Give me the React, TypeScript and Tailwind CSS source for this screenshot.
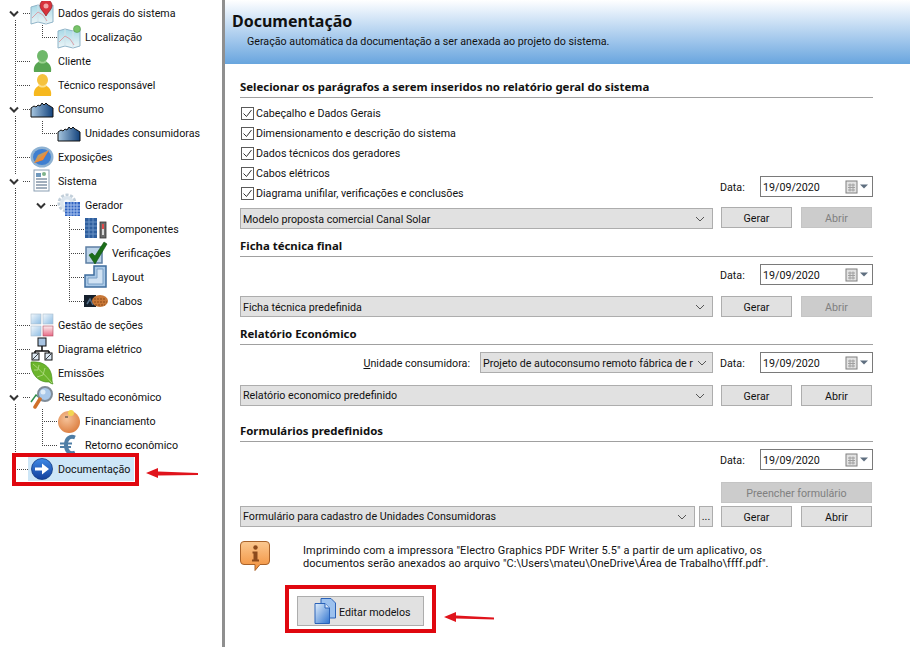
import type { ReactNode } from "react";

const Ico = ({ children, w = 24, h = 24 }: { children: ReactNode; w?: number; h?: number }) => (
  <svg width={w} height={h} viewBox={`0 0 ${w} ${h}`} className="shrink-0">
    {children}
  </svg>
);

const MapBase = () => (
  <>
    <path d="M1 6l7-2 8 2 7-2v17l-7 2-8-2-7 2z" fill="url(#mapG)" stroke="#8fb4c8" strokeWidth="1" />
    <path d="M8 4v17M16 6v17" stroke="#d3e3ea" strokeWidth="1" />
    <path d="M2 17l6-6 5 3 4 6" fill="none" stroke="#d8a0a8" strokeWidth="1" />
  </>
);

const PinMap = () => (
  <Ico>
    <MapBase />
    <path d="M16 15c-3-5-6-7-6-10.500a6 6 0 0 1 12 0c0 3.500-3 5.500-6 10.500z" fill="#d8333c" stroke="#8e1a20" strokeWidth="0.7" />
    <circle cx="16" cy="5" r="2.500" fill="#f0a8a8" />
  </Ico>
);

const GreenMap = () => (
  <Ico>
    <MapBase />
    <circle cx="20" cy="4" r="3.500" fill="#79c36a" stroke="#4f9a48" strokeWidth="0.6" />
  </Ico>
);

const UserIco = ({ a, b, c }: { a: string; b: string; c: string }) => (
  <Ico>
    <ellipse cx="12.500" cy="7" rx="5.500" ry="6" fill={a} />
    <path d="M4 23c-1-6 2-9 6-11h5c4 2 7 5 6 11z" fill={b} />
    <path d="M9.500 11c1 2 5 2 6 0l1 2c-2 2-6 2-8 0z" fill={c} />
  </Ico>
);

const Skyline = () => (
  <Ico>
    <path d="M1 20v-9l3-2 2 1 2-2 2 1 2-3 2 2 2-2 2 2 2 1 3 2v9z" fill="url(#skyG)" stroke="#111" strokeWidth="1" />
  </Ico>
);

const Compass = () => (
  <Ico>
    <ellipse cx="12" cy="12" rx="11.500" ry="10.500" fill="#8fb2d2" />
    <ellipse cx="12" cy="12" rx="9" ry="8" fill="#3f7fd0" />
    <path d="M4 18L19 5l-6 10z" fill="#e0452a" />
    <path d="M4 18l9-3 6-10-11 5z" fill="#f2a33a" opacity="0.75" />
  </Ico>
);

const DocSys = () => (
  <Ico>
    <rect x="4" y="1" width="15" height="21" fill="#fdfdfd" stroke="#8ba0b4" />
    <rect x="6" y="4" width="5" height="4" fill="#6f98bd" />
    <circle cx="14" cy="5" r="2" fill="#7fb38a" />
    <path d="M6 10h11M6 13h11M6 16h11M6 19h11" stroke="#46617c" strokeWidth="1" />
  </Ico>
);

const GearGrid = () => (
  <Ico>
    <circle cx="10" cy="10" r="8" fill="none" stroke="#c2cfda" strokeWidth="3" strokeDasharray="3 1.500" />
    <circle cx="10" cy="10" r="7" fill="#dbe5ee" />
    <circle cx="10" cy="10" r="3.500" fill="#f3f7fa" />
    <rect x="8" y="9" width="15" height="14" fill="#2f62c0" />
    <path d="M8 12h15M8 15h15M8 18h15M8 21h15M11 9v14M14 9v14M17 9v14M20 9v14" stroke="#a8c2ee" strokeWidth="1" />
  </Ico>
);

const Comps = () => (
  <Ico>
    <rect x="1" y="1" width="12" height="20" fill="#2f5f9e" />
    <path d="M1 5h12M1 9h12M1 13h12M1 17h12M5 1v20M9 1v20" stroke="#6b93c5" strokeWidth="1" />
    <rect x="16" y="5" width="6" height="16" fill="#6b6b6b" stroke="#333" strokeWidth="0.8" />
    <rect x="18" y="7" width="2" height="5" fill="#e24a4a" />
    <rect x="18" y="12" width="2" height="6" fill="#d8d8d8" />
  </Ico>
);

const Check = () => (
  <Ico>
    <rect x="2" y="6" width="16" height="16" fill="#bcd3e8" stroke="#5d7fa4" strokeWidth="1.500" />
    <path d="M5 14l3-2 3 3L20 1l3 2L11 23z" fill="#1b6f18" stroke="#10500f" strokeWidth="0.6" />
  </Ico>
);

const LayoutIco = () => (
  <Ico>
    <path d="M1 10h9V1h12v21H1z" fill="#a9c8e6" stroke="#3f6e9f" strokeWidth="1.500" />
    <path d="M4 13h9V4h6v15H4z" fill="#d0e2f3" stroke="#7aa0c6" strokeWidth="1" />
  </Ico>
);

const Cables = () => (
  <Ico>
    <rect x="0" y="6" width="12" height="12" fill="#15202c" />
    <path d="M3 15l3-5 3 6" stroke="#56708a" strokeWidth="1.500" fill="none" />
    <ellipse cx="16" cy="12" rx="8" ry="6" fill="#c87838" />
    <path d="M10 10h12M10 13h13M11 16h10" stroke="#8c4a18" strokeWidth="1" strokeDasharray="2 1" />
  </Ico>
);

const Squares = () => (
  <Ico>
    <rect x="1" y="1" width="10" height="10" fill="url(#sqG)" stroke="#a9bccc" strokeWidth="0.6" />
    <rect x="13" y="1" width="10" height="10" fill="url(#sqG)" stroke="#a9bccc" strokeWidth="0.6" />
    <rect x="1" y="13" width="10" height="10" fill="url(#sqG)" stroke="#a9bccc" strokeWidth="0.6" />
    <rect x="13" y="13" width="10" height="10" fill="url(#pkG)" stroke="#b04a60" strokeWidth="0.6" />
  </Ico>
);

const Hierarchy = () => (
  <Ico>
    <rect x="8" y="1" width="8" height="8" fill="#a8c4e2" stroke="#111" />
    <path d="M12 9v5M5 14h14M5 14v2M19 14v2" stroke="#111" strokeWidth="1.500" fill="none" />
    <rect x="2" y="16" width="7" height="7" fill="#dce8f3" stroke="#111" />
    <rect x="15" y="16" width="7" height="7" fill="#dce8f3" stroke="#111" />
    <path d="M3 22l5-5M16 22l5-5" stroke="#111" strokeWidth="0.8" />
  </Ico>
);

const Leaf = () => (
  <Ico>
    <path d="M1 1c10-1 20 3 21 16 0 2 0 4 1 6-1 0-3-1-4-2C10 22 0 14 1 1z" fill="#6cb52c" stroke="#3f8a1a" strokeWidth="0.6" />
    <path d="M3 3c6 5 12 11 19 19M8 9l1-5M13 14l2-7M8 9l-4 0M13 14l-6 2" stroke="#b7e08a" strokeWidth="0.8" fill="none" />
  </Ico>
);

const Magnifier = () => (
  <Ico>
    <path d="M1 17l5-7 4 3" fill="none" stroke="#2f8f4a" strokeWidth="1.500" />
    <circle cx="15" cy="9" r="7" fill="#a9c8ea" stroke="#7f8c98" strokeWidth="2" />
    <circle cx="13" cy="7" r="2.500" fill="#e0edf8" />
    <path d="M10 14l-5 8" stroke="#d0702a" strokeWidth="3.500" strokeLinecap="round" />
  </Ico>
);

const Piggy = () => (
  <Ico>
    <circle cx="12" cy="13" r="11" fill="url(#pigG)" />
    <circle cx="14" cy="4" r="3" fill="#f2d652" />
    <path d="M8 8h3" stroke="#333" strokeWidth="1" />
  </Ico>
);

const Euro = () => (
  <Ico>
    <path d="M18 4.500c-5-2-9 1-9 7.500s4 9.500 9 7.500" fill="none" stroke="#4f7ea6" strokeWidth="4" />
    <path d="M3 10.500h12M3 14h11" stroke="#4f7ea6" strokeWidth="2" />
  </Ico>
);

const ArrowCircle = () => (
  <Ico>
    <circle cx="12" cy="12" r="10.500" fill="url(#arG)" stroke="#123a80" strokeWidth="0.8" />
    <path d="M5 10.500h7V6.500l7 5.500-7 5.500v-4H5z" fill="#fff" />
  </Ico>
);

const Calendar = () => (
  <svg width="24" height="14" viewBox="0 0 24 14" className="shrink-0">
    <rect x="1" y="1" width="11" height="12" fill="#e3e3e3" stroke="#808080" />
    <path d="M3 5h7M3 7.500h7M3 10h7M5 3.500v8M8 3.500v8" stroke="#a0a0a0" strokeWidth="1" />
    <path d="M15 4.500h8l-4 4z" fill="#5f6f80" />
  </svg>
);

const InfoBubble = () => (
  <svg width="30" height="30" viewBox="0 0 30 30" className="shrink-0">
    <path d="M4 .5h22a3.500 3.500 0 0 1 3.500 3.500v16a3.500 3.500 0 0 1-3.500 3.500h-6l-5 6v-6H4A3.500 3.500 0 0 1 .5 20V4A3.500 3.500 0 0 1 4 .5z" fill="url(#infG)" stroke="#a8622a" />
    <circle cx="15.500" cy="6.500" r="2.200" fill="#8c4a1c" />
    <path d="M12.500 10.500h5v8h1.500v2h-7v-2h1.500v-6h-1z" fill="#8c4a1c" />
  </svg>
);

const PagesIco = () => (
  <svg width="22" height="26" viewBox="0 0 22 26" className="shrink-0">
    <path d="M7 .5h10l4.500 4.500v15H7z" fill="#9cc1ee" stroke="#2a62b8" />
    <path d="M1 5.500h10l4.500 4.500v15.500H1z" fill="url(#pageG)" stroke="#2a62b8" />
    <path d="M11 5.500V10h4.500" fill="#dbe9f9" stroke="#2a62b8" />
  </svg>
);

type Line = [number, number, number];
type Row = { label: string; level: number; icon: ReactNode; chevron?: boolean; lines: Line[]; selected?: boolean };

const tree: Row[] = [
  { label: "Dados gerais do sistema", level: 0, icon: <PinMap />, chevron: true, lines: [[15, 19, 24], [42, 20, 24]] },
  { label: "Localização", level: 1, icon: <GreenMap />, lines: [[15, 0, 24], [42, 0, 12]] },
  { label: "Cliente", level: 0, icon: <UserIco a="#6fb86a" b="#58a552" c="#9bd48f" />, lines: [[15, 0, 24]] },
  { label: "Técnico responsável", level: 0, icon: <UserIco a="#f5c23e" b="#f6b81f" c="#fce08a" />, lines: [[15, 0, 24]] },
  { label: "Consumo", level: 0, icon: <Skyline />, chevron: true, lines: [[15, 0, 6], [15, 19, 24], [42, 20, 24]] },
  { label: "Unidades consumidoras", level: 1, icon: <Skyline />, lines: [[15, 0, 24], [42, 0, 12]] },
  { label: "Exposições", level: 0, icon: <Compass />, lines: [[15, 0, 24]] },
  { label: "Sistema", level: 0, icon: <DocSys />, chevron: true, lines: [[15, 0, 6], [15, 19, 24], [42, 21, 24]] },
  { label: "Gerador", level: 1, icon: <GearGrid />, chevron: true, lines: [[15, 0, 24], [69, 20, 24]] },
  { label: "Componentes", level: 2, icon: <Comps />, lines: [[15, 0, 24], [69, 0, 24]] },
  { label: "Verificações", level: 2, icon: <Check />, lines: [[15, 0, 24], [69, 0, 24]] },
  { label: "Layout", level: 2, icon: <LayoutIco />, lines: [[15, 0, 24], [69, 0, 24]] },
  { label: "Cabos", level: 2, icon: <Cables />, lines: [[15, 0, 24], [69, 0, 12]] },
  { label: "Gestão de seções", level: 0, icon: <Squares />, lines: [[15, 0, 24]] },
  { label: "Diagrama elétrico", level: 0, icon: <Hierarchy />, lines: [[15, 0, 24]] },
  { label: "Emissões", level: 0, icon: <Leaf />, lines: [[15, 0, 24]] },
  { label: "Resultado econômico", level: 0, icon: <Magnifier />, chevron: true, lines: [[15, 0, 6], [15, 19, 24], [42, 20, 24]] },
  { label: "Financiamento", level: 1, icon: <Piggy />, lines: [[15, 0, 24], [42, 0, 24]] },
  { label: "Retorno econômico", level: 1, icon: <Euro />, lines: [[15, 0, 24], [42, 0, 12]] },
  { label: "Documentação", level: 0, icon: <ArrowCircle />, lines: [[15, 0, 12]], selected: true },
];

function TreeRow({ row }: { row: Row }) {
  const width = row.level * 27 + 30;
  const cx = row.level * 27 + 15;
  return (
    <div className="flex h-6 items-center">
      <svg width={width} height="24" viewBox={`0 0 ${width} 24`} className="shrink-0">
        {row.lines.map(([x, a, b], i) => (
          <line key={i} x1={x + 0.5} y1={a} x2={x + 0.5} y2={b} stroke="#444" strokeDasharray="1 1" />
        ))}
        <line x1={row.chevron ? cx + 8 : cx} y1="12.500" x2={width} y2="12.500" stroke="#444" strokeDasharray="1 1" />
        {row.chevron && <path d={`M${cx - 5} 10.500l4 4 4-4`} fill="none" stroke="#333" strokeWidth="2" />}
      </svg>
      {row.selected ? (
        <div className="-ml-[2px] flex h-6 w-[106px] items-center gap-1 bg-[#cde6f7] pl-[2px]">
          {row.icon}
          <span className="pt-[2px]">{row.label}</span>
        </div>
      ) : (
        <div className="flex items-center gap-1">
          {row.icon}
          <span className="pt-[2px] whitespace-nowrap">{row.label}</span>
        </div>
      )}
    </div>
  );
}

const btn = "flex h-[21px] w-[71px] shrink-0 items-center justify-center border border-[#adadad] bg-[#e1e1e1] pt-[2px]";
const btnOff = "flex h-[21px] w-[71px] shrink-0 items-center justify-center border border-[#c4c4c4] bg-[#cccccc] pt-[2px] text-[#808080]";

function Heading({ children, className }: { children: ReactNode; className: string }) {
  return <div className={`h-[18px] border-b border-[#a0a0a0] font-['Noto_Sans',sans-serif] text-[11.400px] leading-[14px] font-bold ${className}`}>{children}</div>;
}

function DateField() {
  return (
    <div className="flex h-[21px] items-center">
      <span className="w-10 pt-[2px]">Data:</span>
      <div className="flex h-[21px] w-[113px] items-center justify-between border border-[#7a7a7a] bg-white pr-[3px] pl-[2px]">
        <span className="pt-[2px]">19/09/2020</span>
        <Calendar />
      </div>
    </div>
  );
}

function Select({ value, className, textClass = "pt-[2px]" }: { value: string; className: string; textClass?: string }) {
  return (
    <div className={`flex h-[21px] items-center justify-between border border-[#adadad] bg-[#e1e1e1] pr-[7px] pl-[2px] ${className}`}>
      <span className={`whitespace-nowrap ${textClass}`}>{value}</span>
      <svg width="10" height="6" viewBox="0 0 10 6" className="ml-1 shrink-0">
        <path d="M1 1l4 4 4-4" fill="none" stroke="#555" />
      </svg>
    </div>
  );
}

function ActionRow({ value, abrirOff, selectClass = "", textClass }: { value: string; abrirOff?: boolean; selectClass?: string; textClass?: string }) {
  return (
    <div className="flex items-start">
      <Select value={value} className={`w-[473px] ${selectClass}`} textClass={textClass} />
      <div className={`${btn} ml-2`}>Gerar</div>
      <div className={`${abrirOff ? btnOff : btn} ml-[9px]`}>Abrir</div>
    </div>
  );
}

const checks = [
  "Cabeçalho e Dados Gerais",
  "Dimensionamento e descrição do sistema",
  "Dados técnicos dos geradores",
  "Cabos elétricos",
  "Diagrama unifilar, verificações e conclusões",
];

export default function App() {
  return (
    <div className="relative flex h-[647px] w-[910px] overflow-hidden bg-white font-['Roboto',sans-serif] text-[10.700px] leading-[14px] text-[#111]">
      <svg className="absolute h-0 w-0">
        <defs>
          <linearGradient id="mapG" x1="0" y1="0" x2="0" y2="1"><stop offset="0" stopColor="#a6d8e6" /><stop offset="1" stopColor="#eef6f8" /></linearGradient>
          <linearGradient id="skyG" x1="0" y1="0" x2="1" y2="0"><stop offset="0" stopColor="#a8c7e0" /><stop offset="1" stopColor="#12427c" /></linearGradient>
          <linearGradient id="sqG" x1="0" y1="0" x2="1" y2="1"><stop offset="0" stopColor="#f3f8fc" /><stop offset="1" stopColor="#8dbde4" /></linearGradient>
          <linearGradient id="pkG" x1="0" y1="0" x2="0" y2="1"><stop offset="0" stopColor="#fbeef0" /><stop offset="1" stopColor="#e86a85" /></linearGradient>
          <radialGradient id="pigG" cx="0.4" cy="0.35" r="0.7"><stop offset="0" stopColor="#f6c39a" /><stop offset="1" stopColor="#dc7d3e" /></radialGradient>
          <linearGradient id="arG" x1="0" y1="0" x2="0" y2="1"><stop offset="0" stopColor="#3f8ae6" /><stop offset="1" stopColor="#123f9c" /></linearGradient>
          <linearGradient id="infG" x1="0" y1="0" x2="0" y2="1"><stop offset="0" stopColor="#fbc890" /><stop offset="1" stopColor="#f28f3a" /></linearGradient>
          <linearGradient id="pageG" x1="0" y1="0" x2="1" y2="1"><stop offset="0" stopColor="#e3effb" /><stop offset="1" stopColor="#2f74d0" /></linearGradient>
        </defs>
      </svg>

      <aside className="w-[222px] shrink-0 pt-px">
        {tree.map((row) => (
          <TreeRow key={row.label} row={row} />
        ))}
      </aside>
      <div className="w-[3px] shrink-0 bg-[#8f8f8f]" />

      <main className="min-w-0 flex-1">
        <header className="h-16 bg-gradient-to-b from-[#ffffff] to-[#68a5de] pt-[11px] pl-[7px]">
          <h1 className="font-['Noto_Sans',sans-serif] text-[16px] leading-5 font-bold">Documentação</h1>
          <p className="mt-[4px] pl-[15px] text-[#111]">Geração automática da documentação a ser anexada ao projeto do sistema.</p>
        </header>

        <div className="ml-[15px] w-[633px]">
          <Heading className="mt-4">Selecionar os parágrafos a serem inseridos no relatório geral do sistema</Heading>
          <div className="mt-[5px] flex items-end justify-between">
            <div>
              {checks.map((label) => (
                <div key={label} className="flex h-5 items-center pl-px">
                  <div className="flex h-[13px] w-[13px] items-center justify-center border border-[#5a5a5a] bg-white">
                    <svg width="11" height="11" viewBox="0 0 11 11">
                      <path d="M1.500 5.500l3 3 5-6.500" fill="none" stroke="#333" strokeWidth="1" />
                    </svg>
                  </div>
                  <span className="ml-[2px] pt-[2px]">{label}</span>
                </div>
              ))}
            </div>
            <div className="mb-[6px]">
              <DateField />
            </div>
          </div>
          <div className="mt-1 h-[22px]">
            <ActionRow value="Modelo proposta comercial Canal Solar" abrirOff selectClass="mt-px" />
          </div>

          <Heading className="mt-[10px]">Ficha técnica final</Heading>
          <div className="mt-[7px] flex justify-end">
            <DateField />
          </div>
          <div className="mt-[11px]">
            <ActionRow value="Ficha técnica predefinida" abrirOff />
          </div>

          <Heading className="mt-[10px]">Relatório Económico</Heading>
          <div className="mt-[7px] flex items-center justify-end">
            <span className="mr-[10px] pt-[2px]"><span className="underline">U</span>nidade consumidora:</span>
            <Select value="Projeto de autoconsumo remoto fábrica de r" className="w-[233px]" />
            <div className="ml-[7px]">
              <DateField />
            </div>
          </div>
          <div className="mt-3">
            <ActionRow value="Relatório economico predefinido" textClass="pt-0" />
          </div>

          <Heading className="mt-[18px]">Formulários predefinidos</Heading>
          <div className="mt-[7px] flex justify-end">
            <DateField />
          </div>
          <div className="mt-3 flex justify-end pr-px">
            <div className={`${btnOff} w-[151px]`}>Preencher formulário</div>
          </div>
          <div className="mt-[3px] flex items-center">
            <Select value="Formulário para cadastro de Unidades Consumidoras" className="w-[455px]" textClass="pt-0" />
            <div className="ml-[4px] flex h-[21px] w-[14px] items-center justify-center border border-[#adadad] bg-[#e1e1e1]">...</div>
            <div className={`${btn} ml-2`}>Gerar</div>
            <div className={`${btn} ml-[9px]`}>Abrir</div>
          </div>

          <div className="mt-[14px] flex">
            <InfoBubble />
            <p className="mt-[3px] ml-[33px] w-[520px] text-[11px] leading-[13px]">
              <span className="block tracking-[0.13px] whitespace-nowrap">Imprimindo com a impressora "Electro Graphics PDF Writer 5.5" a partir de um aplicativo, os</span>
              <span className="block tracking-[0.05px] whitespace-nowrap">documentos serão anexados ao arquivo "C:\Users\mateu\OneDrive\Área de Trabalho\ffff.pdf".</span>
            </p>
          </div>

          <div className="mt-[25px] ml-[57px] flex h-[30px] w-[127px] items-center border border-[#adadad] bg-[#e1e1e1] pl-4">
            <PagesIco />
            <span className="ml-[3px] pt-[4px]">Editar modelos</span>
          </div>
        </div>
      </main>

      {/* red annotations from the screenshot */}
      <div className="absolute top-[453px] left-3 h-[33px] w-[127px] border-4 border-[#e0070f]" />
      <div className="absolute top-[585px] left-[285px] h-[48px] w-[151px] border-4 border-[#e0070f]" />
      <svg className="absolute top-[466px] left-[145px]" width="56" height="14" viewBox="0 0 56 14">
        <path d="M1 7l12-5v3.500l40 1.500v2l-40 .5V12z" fill="#e0141c" />
      </svg>
      <svg className="absolute top-[610px] left-[443px]" width="54" height="14" viewBox="0 0 54 14">
        <path d="M1 7l12-5v3.500l38 2v2l-38-1V12z" fill="#e0141c" />
      </svg>
    </div>
  );
}
